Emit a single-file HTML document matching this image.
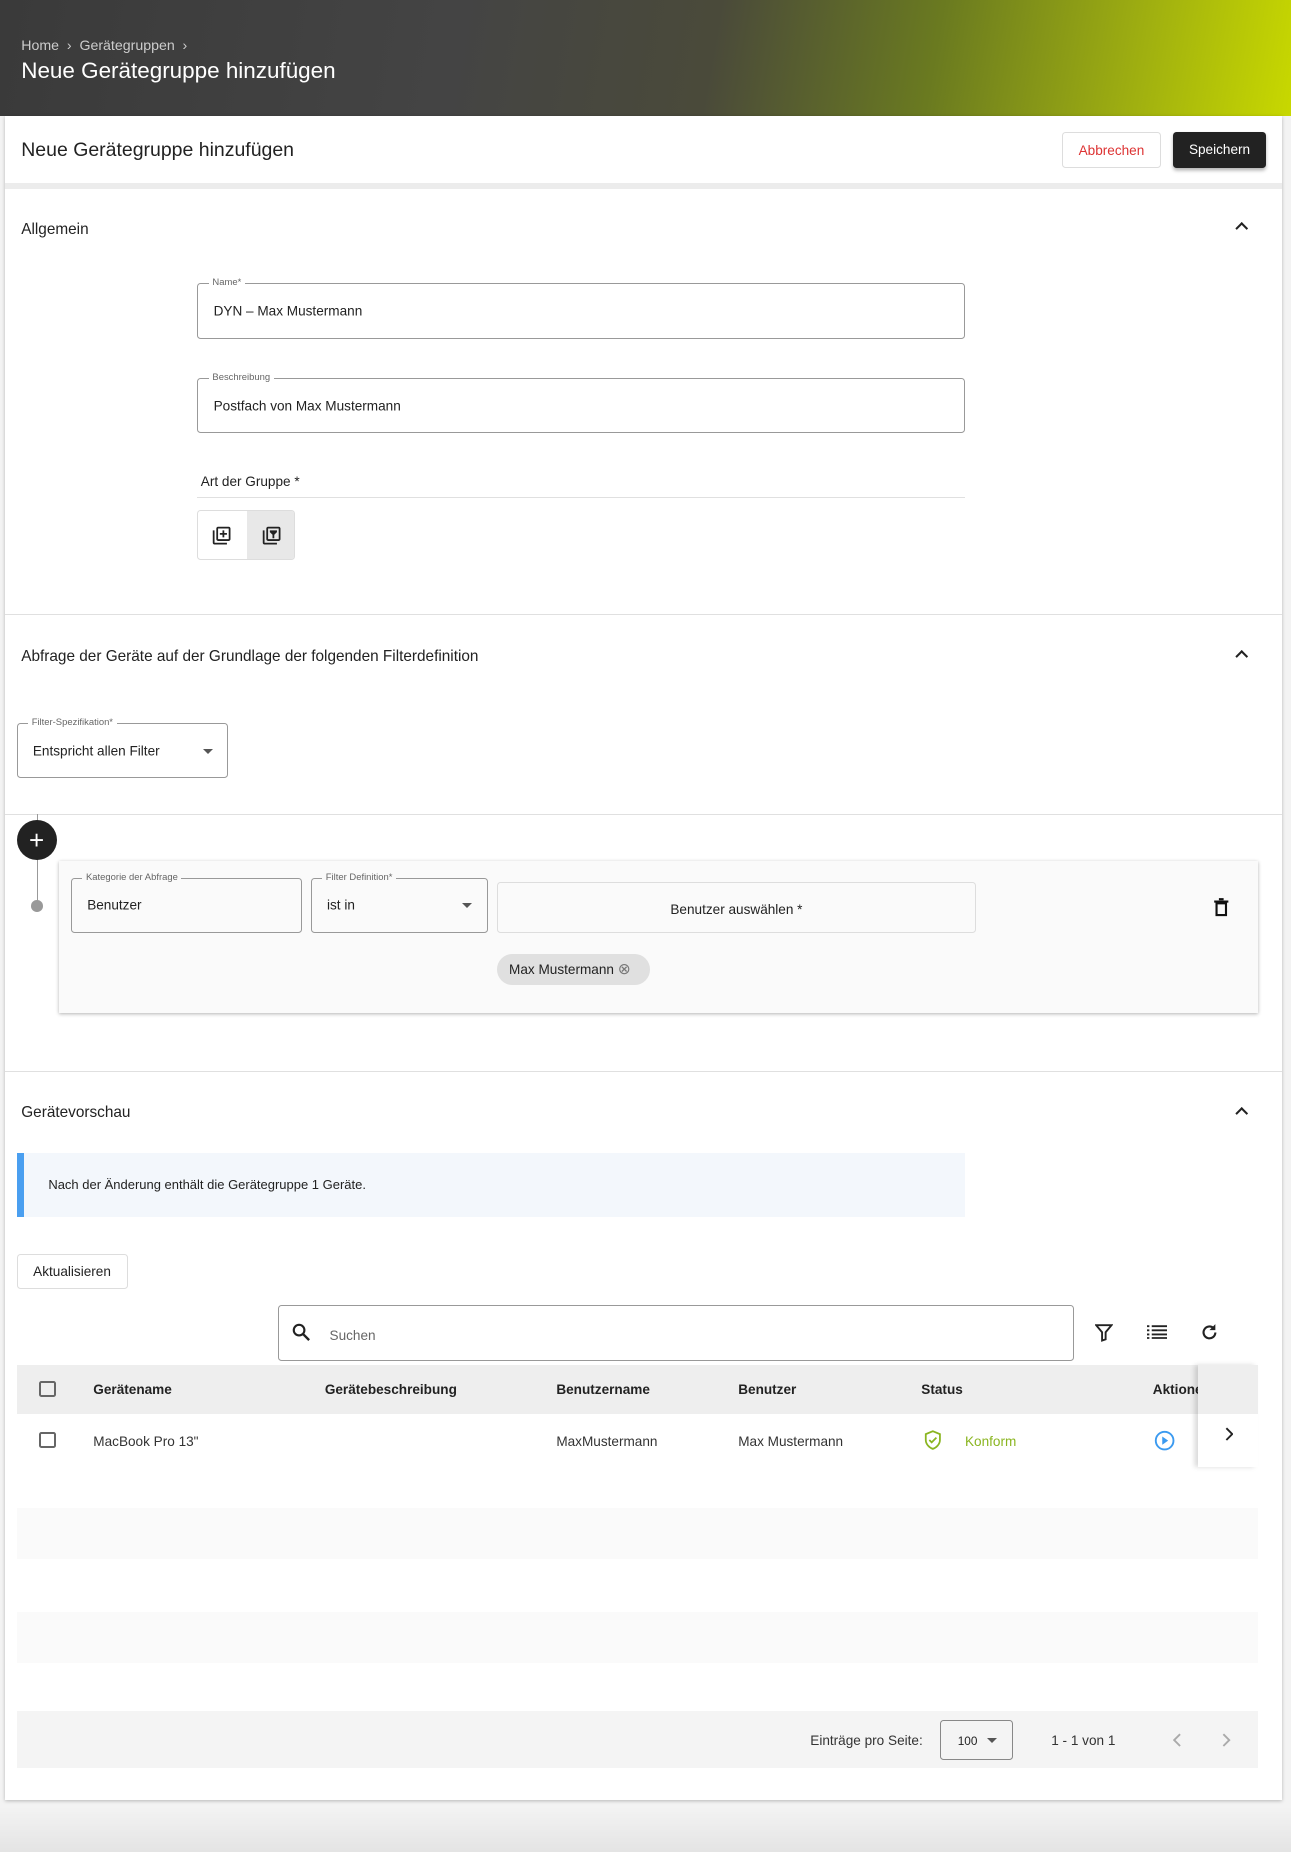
<!DOCTYPE html>
<html><head><meta charset="utf-8"><style>
*{box-sizing:border-box;margin:0;padding:0}
html,body{width:1291px;height:1852px;overflow:hidden;background:#f0f0f0}
body{font-family:"Liberation Sans",sans-serif;color:#222}
#w{width:1093px;height:1568px;zoom:1.18115;position:relative;background:linear-gradient(#f3f3f3,#f3f3f3 1530px,#e4e4e4 1568px)}
.a{position:absolute}
.hdr{left:0;top:0;width:1093px;height:98px;background:linear-gradient(100deg,#3a3a3a 0%,#444 35%,#4a4a3a 55%,#6a7a20 72%,#a0b010 88%,#c8d800 100%)}
.card{left:4px;top:98px;width:1081px;height:1426px;background:#fff;box-shadow:0 1px 3px rgba(0,0,0,.25)}
.fs{font-size:13px}
.field{position:absolute;border:1px solid #999;border-radius:3px;font-size:11.5px}
.field .lb{position:absolute;top:-6px;left:9px;background:#fff;padding:0 3px;font-size:8px;color:#666}
.field .v{position:absolute;left:13px;top:50%;transform:translateY(-50%)}
.hl{position:absolute;height:1px;background:#e0e0e0}
.chev{position:absolute;width:8px;height:8px;border-left:2px solid #222;border-top:2px solid #222;transform:rotate(45deg)}
.tri{position:absolute;width:0;height:0;border-left:5px solid transparent;border-right:5px solid transparent;border-top:5px solid #555}
.cb{position:absolute;width:14px;height:14px;border:2px solid #666;border-radius:2px}
</style></head><body><div id="w">
<div class="a hdr"></div>
<div class="a" style="left:18px;top:32px;font-size:12px;color:#ccc">Home &nbsp;›&nbsp; Gerätegruppen &nbsp;›</div>
<div class="a" style="left:18px;top:49px;font-size:19px;color:#fff">Neue Gerätegruppe hinzufügen</div>
<div class="a card"></div>
<div class="a" style="left:18px;top:118px;font-size:16.5px">Neue Gerätegruppe hinzufügen</div>
<div class="a" style="left:899px;top:112px;width:84px;height:30px;border:1px solid #ddd;border-radius:3px;color:#d33;font-size:11.5px;text-align:center;line-height:30px">Abbrechen</div>
<div class="a" style="left:993px;top:112px;width:79px;height:30px;background:#222;border-radius:3px;color:#fff;font-size:11.5px;text-align:center;line-height:31px;box-shadow:0 2px 3px rgba(0,0,0,.3)">Speichern</div>
<div class="a" style="left:4px;top:155px;width:1081px;height:5px;background:#ececec"></div>
<div class="a fs" style="left:18px;top:187px">Allgemein</div>
<div class="chev" style="left:1047px;top:190px"></div>
<div class="field" style="left:167px;top:240px;width:650px;height:47px"><span class="lb">Name*</span><span class="v">DYN – Max Mustermann</span></div>
<div class="field" style="left:167px;top:320px;width:650px;height:47px"><span class="lb">Beschreibung</span><span class="v">Postfach von Max Mustermann</span></div>
<div class="a" style="left:170px;top:401px;font-size:11.5px">Art der Gruppe *</div>
<div class="hl" style="left:167px;top:421px;width:650px"></div>
<div class="a" style="left:167px;top:432px;width:83px;height:42px;border:1px solid #ddd;border-radius:3px;overflow:hidden">
<div class="a" style="left:41px;top:0;width:42px;height:42px;background:#e8e8e8"></div>
<svg class="a" style="left:11px;top:12px" width="18" height="18" viewBox="0 0 24 24"><path d="M4 6H2v14c0 1.1.9 2 2 2h14v-2H4V6zm16-4H8c-1.1 0-2 .9-2 2v12c0 1.1.9 2 2 2h12c1.1 0 2-.9 2-2V4c0-1.1-.9-2-2-2zm0 14H8V4h12v12zm-7-2h2v-3h3V9h-3V6h-2v3h-3v2h3z" fill="#222"/></svg>
<svg class="a" style="left:53px;top:12px" width="18" height="18" viewBox="0 0 24 24"><path d="M4 6H2v14c0 1.1.9 2 2 2h14v-2H4V6zm16-4H8c-1.1 0-2 .9-2 2v12c0 1.1.9 2 2 2h12c1.1 0 2-.9 2-2V4c0-1.1-.9-2-2-2zm0 14H8V4h12v12zM10 6h8v2l-3 3v4h-2v-4l-3-3z" fill="#222"/></svg>
</div>
<div class="hl" style="left:4px;top:520px;width:1081px"></div>
<div class="a fs" style="left:18px;top:549px">Abfrage der Geräte auf der Grundlage der folgenden Filterdefinition</div>
<div class="chev" style="left:1047px;top:552px"></div>
<div class="field" style="left:14px;top:612px;width:179px;height:47px"><span class="lb">Filter-Spezifikation*</span><span class="v">Entspricht allen Filter</span><span class="tri" style="left:157px;top:21px"></span></div>
<div class="hl" style="left:4px;top:689px;width:1081px"></div>
<div class="a" style="left:31px;top:689px;width:1px;height:78px;background:#999"></div>
<div class="a" style="left:26px;top:762px;width:10px;height:10px;border-radius:50%;background:#999"></div>
<div class="a" style="left:50px;top:729px;width:1015px;height:129px;background:#fafafa;box-shadow:0 1px 3px rgba(0,0,0,.3)"></div>
<div class="a" style="left:14px;top:694px;width:34px;height:34px;border-radius:50%;background:#222;color:#fff;font-size:22px;line-height:34px;text-align:center">+</div>
<div class="field" style="left:60px;top:743px;width:196px;height:47px"><span class="lb" style="background:#fafafa">Kategorie der Abfrage</span><span class="v">Benutzer</span></div>
<div class="field" style="left:263px;top:743px;width:150px;height:47px"><span class="lb" style="background:#fafafa">Filter Definition*</span><span class="v">ist in</span><span class="tri" style="left:127px;top:21px"></span></div>
<div class="a" style="left:421px;top:747px;width:405px;height:43px;border:1px solid #ddd;border-radius:3px;font-size:11.5px;text-align:center;line-height:45px">Benutzer auswählen *</div>
<svg class="a" style="left:1027px;top:760px" width="14" height="16" viewBox="0 0 14 16"><path d="M3 4.5h8v10H3z M1 3h12 M5 1h4" stroke="#111" stroke-width="1.8" fill="none"/></svg>
<div class="a" style="left:421px;top:808px;width:129px;height:26px;background:#e0e0e0;border-radius:13px;font-size:11.5px;line-height:27px;padding-left:10px">Max Mustermann <span style="color:#777;font-size:13px">&#8855;</span></div>
<div class="hl" style="left:4px;top:907px;width:1081px"></div>
<div class="a fs" style="left:18px;top:935px">Gerätevorschau</div>
<div class="chev" style="left:1047px;top:939px"></div>
<div class="a" style="left:14px;top:976px;width:803px;height:54px;background:#f3f7fc;border-left:6px solid #4a9ff0;font-size:11px;line-height:55px;padding-left:21px">Nach der Änderung enthält die Gerätegruppe 1 Geräte.</div>
<div class="a" style="left:14px;top:1062px;width:94px;height:29px;border:1px solid #ddd;border-radius:3px;font-size:11.5px;text-align:center;line-height:29px">Aktualisieren</div>
<div class="a" style="left:235px;top:1105px;width:674px;height:47px;border:1px solid #999;border-radius:3px"></div>
<svg class="a" style="left:247px;top:1120px" width="16" height="16" viewBox="0 0 16 16"><circle cx="6" cy="6" r="4.5" stroke="#222" stroke-width="1.8" fill="none"/><path d="M9.5 9.5l5 5" stroke="#222" stroke-width="2"/></svg>
<div class="a" style="left:279px;top:1124px;font-size:11.5px;color:#666">Suchen</div>
<svg class="a" style="left:927px;top:1121px" width="15" height="15" viewBox="0 0 15 15"><path d="M1 1h13L9 7v6l-3 1V7z" stroke="#222" stroke-width="1.6" fill="none"/></svg>
<svg class="a" style="left:971px;top:1122px" width="17" height="12" viewBox="0 0 17 12"><path d="M0 1h2M0 4.5h2M0 8h2M0 11h2M4 1h13M4 4.5h13M4 8h13M4 11h13" stroke="#222" stroke-width="1.5"/></svg>
<svg class="a" style="left:1016px;top:1120px" width="16" height="16" viewBox="0 0 16 16"><path d="M13 8a5 5 0 1 1-1.5-3.6" stroke="#222" stroke-width="1.8" fill="none"/><path d="M13 1v5H8z" fill="#222"/></svg>
<div class="a" style="left:14px;top:1156px;width:1051px;height:41px;background:#eee"></div>
<div class="cb" style="left:33px;top:1169px"></div>
<div class="a" style="left:79px;top:1170px;font-size:11.5px;font-weight:bold">Gerätename</div>
<div class="a" style="left:275px;top:1170px;font-size:11.5px;font-weight:bold">Gerätebeschreibung</div>
<div class="a" style="left:471px;top:1170px;font-size:11.5px;font-weight:bold">Benutzername</div>
<div class="a" style="left:625px;top:1170px;font-size:11.5px;font-weight:bold">Benutzer</div>
<div class="a" style="left:780px;top:1170px;font-size:11.5px;font-weight:bold">Status</div>
<div class="a" style="left:976px;top:1170px;font-size:11.5px;font-weight:bold;width:38px;overflow:hidden;white-space:nowrap">Aktionen</div>
<div class="a" style="left:1014px;top:1156px;width:51px;height:86px;background:#fff;box-shadow:-3px 0 4px rgba(0,0,0,.15)"><div style="height:41px;background:#eee"></div></div>
<div class="cb" style="left:33px;top:1212px"></div>
<div class="a" style="left:79px;top:1214px;font-size:11.5px;color:#333">MacBook Pro 13"</div>
<div class="a" style="left:471px;top:1214px;font-size:11.5px;color:#333">MaxMustermann</div>
<div class="a" style="left:625px;top:1214px;font-size:11.5px;color:#333">Max Mustermann</div>
<svg class="a" style="left:782px;top:1211px" width="15" height="17" viewBox="0 0 15 17"><path d="M7.5 1L1.5 3.5v5c0 3.5 3 6.5 6 7.5 3-1 6-4 6-7.5v-5z" stroke="#8ab520" stroke-width="1.5" fill="none"/><path d="M4.5 8.5l2 2 4-4" stroke="#8ab520" stroke-width="1.5" fill="none"/></svg>
<div class="a" style="left:817px;top:1214px;font-size:11.5px;color:#8ab520">Konform</div>
<svg class="a" style="left:977px;top:1211px" width="18" height="18" viewBox="0 0 18 18"><circle cx="9" cy="9" r="7.5" stroke="#3b9af0" stroke-width="1.6" fill="none"/><path d="M7 5.5v7l5-3.5z" fill="#3b9af0"/></svg>
<svg class="a" style="left:1036px;top:1208px" width="8" height="12" viewBox="0 0 8 12"><path d="M2 1l5 5-5 5" stroke="#222" stroke-width="1.6" fill="none"/></svg>
<div class="a" style="left:14px;top:1277px;width:1051px;height:43px;background:#fafafa"></div>
<div class="a" style="left:14px;top:1365px;width:1051px;height:43px;background:#fafafa"></div>
<div class="a" style="left:14px;top:1449px;width:1051px;height:48px;background:#f4f4f4"></div>
<div class="a" style="left:686px;top:1467px;font-size:11.5px;color:#333">Einträge pro Seite:</div>
<div class="a" style="left:796px;top:1456px;width:62px;height:34px;border:1px solid #888;border-radius:3px;font-size:10px;line-height:34px;padding-left:14px">100<span class="tri" style="left:39px;top:15px"></span></div>
<div class="a" style="left:890px;top:1467px;font-size:11.5px;color:#333">1 - 1 von 1</div>
<svg class="a" style="left:993px;top:1467px" width="8" height="12" viewBox="0 0 8 12"><path d="M6 1L1 6l5 5" stroke="#aaa" stroke-width="1.6" fill="none"/></svg>
<svg class="a" style="left:1034px;top:1467px" width="8" height="12" viewBox="0 0 8 12"><path d="M2 1l5 5-5 5" stroke="#aaa" stroke-width="1.6" fill="none"/></svg>
</div></body></html>
